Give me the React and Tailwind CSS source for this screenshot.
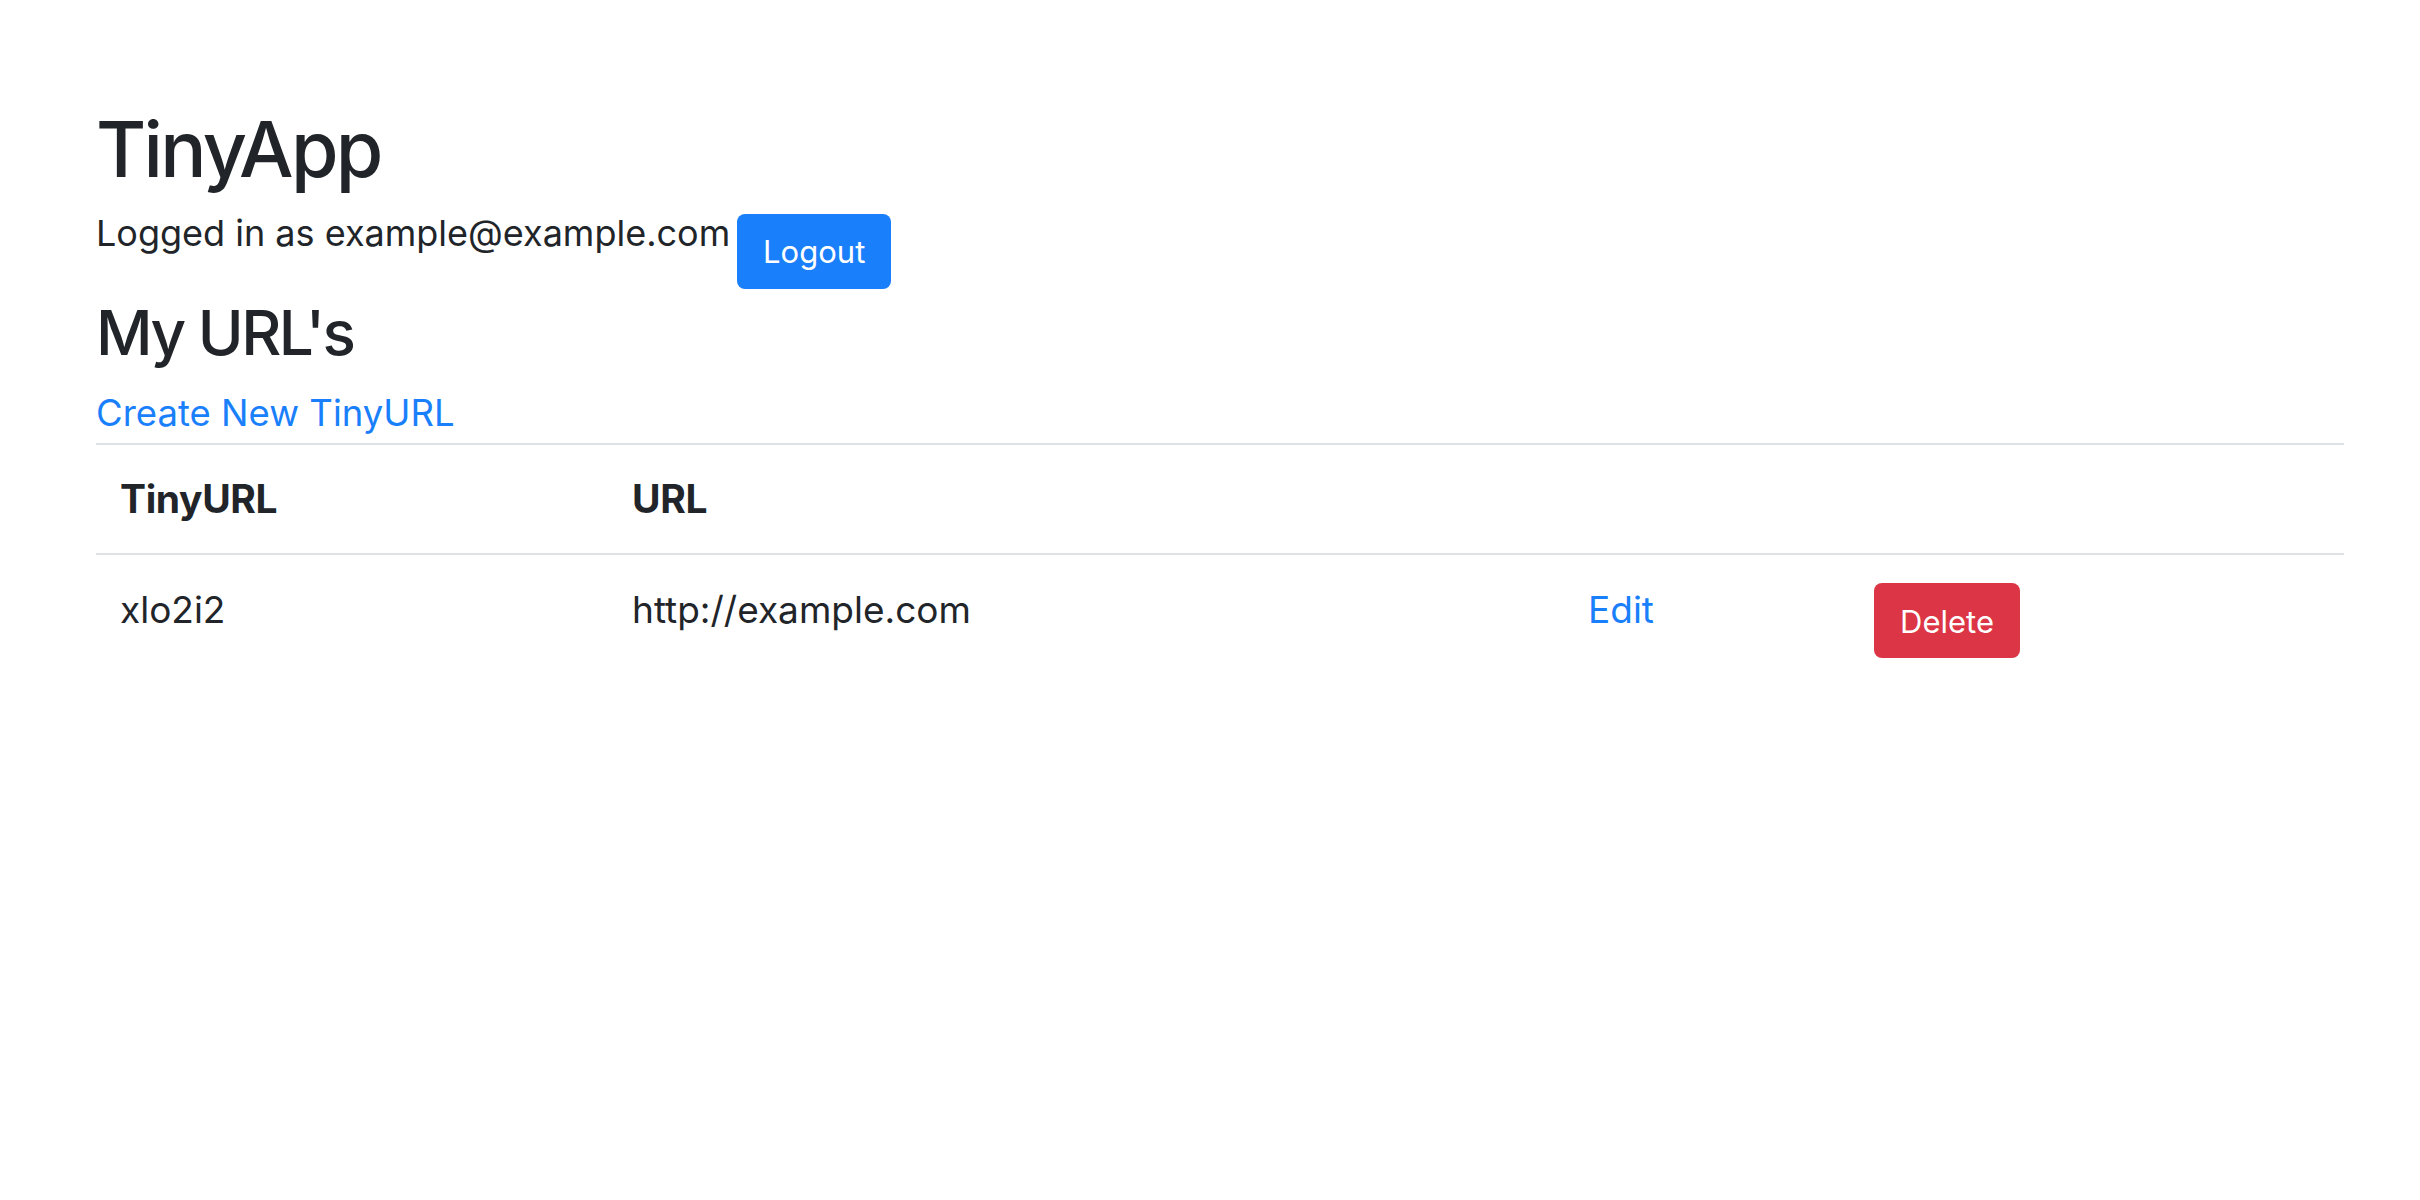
const urls = [{ id: 'xlo2i2', long: 'http://example.com' }];

const App = () => {
  return (
    <div className="min-h-screen bg-white text-[#212529]" style={{ fontFamily: 'Inter, "Noto Sans", sans-serif' }}>
      <div className="pl-[96px] pr-[76px] pt-[101px]">
        <h1 className="text-[77px] leading-[96px] font-medium tracking-[-0.035em] mb-[15px]">TinyApp</h1>

        <div className="flex items-start">
          <span className="text-[36px] leading-[43px]">Logged in as example@example.com</span>
          <button className="mt-[2px] ml-[7px] h-[75px] w-[154px] pt-[2px] rounded-[8px] bg-[#1a7ffb] text-white text-[31px] flex items-center justify-center">
            Logout
          </button>
        </div>

        <h2 className="mt-[5px] mb-[15px] text-[62px] leading-[77px] font-medium tracking-[-0.04em]">My URL's</h2>

        <a href="#" className="block mt-[1px] text-[36.5px] leading-[54px] text-[#1a7ffb]">Create New TinyURL</a>

        <table className="mt-[3px] w-[2248px] table-fixed border-collapse">
          <colgroup>
            <col className="w-[512px]" />
            <col className="w-[956px]" />
            <col className="w-[286px]" />
            <col className="w-[494px]" />
          </colgroup>
          <thead>
            <tr className="border-t-2 border-b-2 border-[#dee2e6]">
              <th className="p-[24px] text-left text-[39px] leading-[60px] font-bold tracking-[-0.01em]">TinyURL</th>
              <th className="p-[24px] text-left text-[39px] leading-[60px] font-bold tracking-[-0.01em]">URL</th>
              <th className="p-[24px]"></th>
              <th className="p-[24px]"></th>
            </tr>
          </thead>
          <tbody>
            {urls.map(u => (
              <tr key={u.id}>
                <td className="px-[24px] pt-[28px] pb-[24px] align-top text-[37px] leading-[54px]">{u.id}</td>
                <td className="px-[24px] pt-[28px] pb-[24px] align-top text-[37px] leading-[54px]">{u.long}</td>
                <td className="px-[24px] pt-[28px] pb-[24px] align-top text-[37px] leading-[54px]">
                  <a href="#" className="text-[#1a7ffb]">Edit</a>
                </td>
                <td className="px-[24px] pt-[28px] pb-[24px] align-top">
                  <button className="h-[75px] w-[146px] pt-[3px] rounded-[8px] bg-[#dc3545] text-white text-[31px] flex items-center justify-center">
                    Delete
                  </button>
                </td>
              </tr>
            ))}
          </tbody>
        </table>
      </div>
    </div>
  );
};

export default App;
